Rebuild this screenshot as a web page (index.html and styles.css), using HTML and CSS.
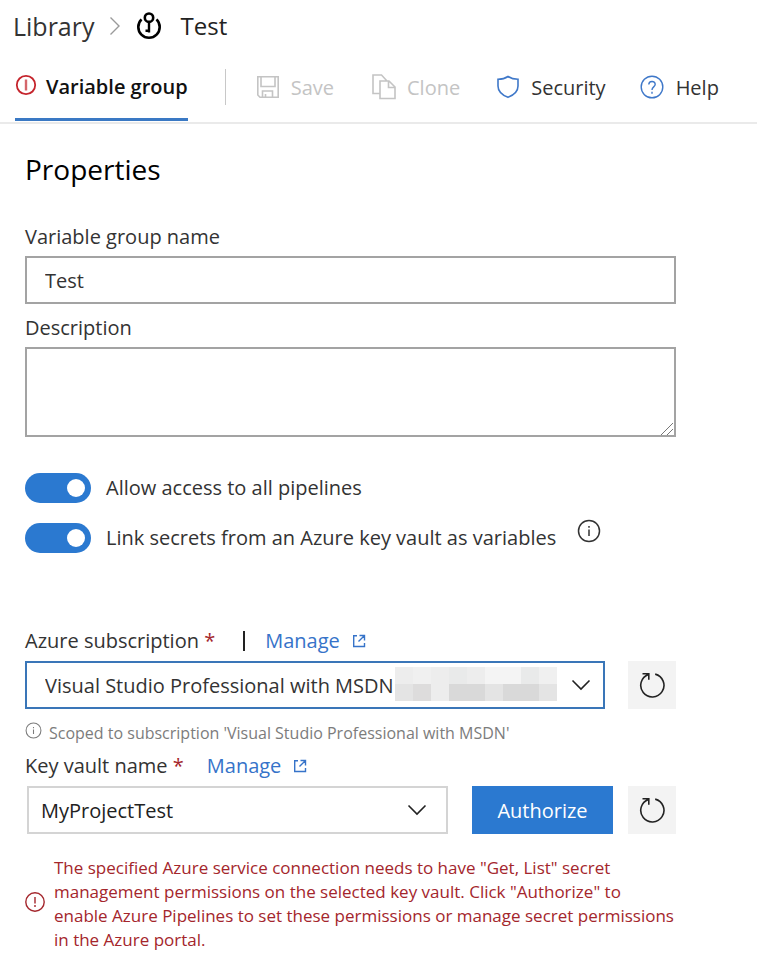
FILE: index.html
```html
<!DOCTYPE html>
<html lang="en">
<head>
<meta charset="utf-8">
<meta name="viewport" content="width=device-width, initial-scale=1">
<title>Test - Library</title>
<link rel="stylesheet" href="styles.css">
</head>
<body>
<svg class="sprite" aria-hidden="true">
  <symbol id="chevron" viewBox="0 0 20 12"><path d="M1.5 1.5 10 10l8.500-8.500" fill="none" stroke="currentColor" stroke-width="1.600"/></symbol>
  <symbol id="external" viewBox="0 0 14 14"><path d="M5 1.700H1.700v10.800h10.800V9M7.500 1.500h5v5M12.500 1.500 6.500 7.500" fill="none" stroke="currentColor" stroke-width="1.400"/></symbol>
  <symbol id="refresh" viewBox="0 0 28 28"><path d="M10.500 3.400A11.600 11.600 0 1 0 17.200 3.100M4.500 2.800h6.300v6" fill="none" stroke="currentColor" stroke-width="1.600"/></symbol>
  <symbol id="info" viewBox="0 0 24 24"><circle cx="12" cy="12" r="10.500" fill="none" stroke="currentColor" stroke-width="1.500"/><path d="M12 10.500v6.500M12 7v1.800" stroke="currentColor" stroke-width="1.500"/></symbol>
  <symbol id="alert" viewBox="0 0 22 22"><circle cx="11" cy="11" r="9.200" fill="none" stroke="currentColor" stroke-width="1.400"/><path d="M11 6v6.500M11 14v2" stroke="currentColor" stroke-width="1.400"/></symbol>
</svg>
<header>
  <nav class="breadcrumb" aria-label="Breadcrumb">
    <a href="#">Library</a>
    <svg class="crumb-arrow" width="12" height="20" viewBox="0 0 12 20" aria-hidden="true"><path d="M1.500 1.500 10 10l-8.500 8.500" fill="none" stroke="#9a9a9a" stroke-width="1.400"/></svg>
    <svg class="crumb-key" width="26" height="28" viewBox="0 0 26 28" aria-hidden="true"><g fill="none" stroke="#000" stroke-width="2.600"><path d="M5.500 7.400a10.700 10.700 0 1 0 15 0"/><circle cx="13" cy="5.700" r="4.200"/><path d="M13 10v10.500M13 18.700H9.500" stroke-width="2.400"/></g></svg>
    <h1>Test</h1>
  </nav>
  <div class="toolbar">
    <a class="tab" href="#" aria-current="page"><svg width="22" height="22" viewBox="0 0 22 22" aria-hidden="true"><circle cx="11" cy="11" r="9.200" fill="none" stroke="#c5242c" stroke-width="1.800"/><path d="M11 5.500v11" stroke="#d4666b" stroke-width="2.400"/></svg>Variable group</a>
    <button class="command save" type="button" disabled><svg width="22" height="22" viewBox="0 0 22 22" fill="none" stroke="currentColor" stroke-width="1.600" aria-hidden="true"><path d="M.8.8h20.400v20.400H3L.8 19zM4 .8v9.700h14V.8M5.500 21v-6h10v6M8.500 21v-3"/></svg>Save</button>
    <button class="command clone" type="button" disabled><svg width="24" height="26" viewBox="0 0 24 26" fill="none" stroke="currentColor" stroke-width="1.600" aria-hidden="true"><path d="M7.800 19.500H1V1h8.500l5.500 6M17 7H8v17.500h15V13zM16.500 7.500V13.500H23"/></svg>Clone</button>
    <button class="command security" type="button"><svg width="22" height="24" viewBox="0 0 22 24" fill="none" stroke="#3f78c9" stroke-width="1.600" aria-hidden="true"><path d="M11 1.500C8 3.500 4.500 4.200 1 4.200V11c0 5.500 4.500 9.200 10 11.300 5.500-2.100 10-5.800 10-11.300V4.200c-3.500 0-7-.7-10-2.700z"/></svg>Security</button>
    <button class="command help" type="button"><svg width="24" height="24" viewBox="0 0 24 24" fill="none" stroke="#3f78c9" stroke-width="1.400" aria-hidden="true"><circle cx="12" cy="12" r="10.800"/><path d="M8.800 9.500c0-4 6.400-4 6.400-.3 0 2.600-3.200 2.800-3.200 5.800M12 16.800v2"/></svg>Help</button>
  </div>
</header>
<main>
  <h2>Properties</h2>
  <label class="label" for="name">Variable group name</label>
  <input class="box" id="name" type="text" value="Test">
  <label class="label" for="description">Description</label>
  <div class="area">
    <textarea class="box" id="description"></textarea>
    <svg class="grip" width="14" height="14" viewBox="0 0 14 14" aria-hidden="true"><path d="M1 13 13 1M7 13l6-6" stroke="#777" stroke-width="1"/></svg>
  </div>
  <div class="switches">
    <div class="switch-row"><input class="switch" id="access" type="checkbox" role="switch" checked><label for="access">Allow access to all pipelines</label></div>
    <div class="switch-row"><input class="switch" id="secrets" type="checkbox" role="switch" checked><label for="secrets">Link secrets from an Azure key vault as variables</label><svg class="hint" width="24" height="24" aria-hidden="true"><use href="#info"/></svg></div>
  </div>
  <div class="label-row"><label for="subscription">Azure subscription <span class="required">*</span></label><span class="divider"></span><a class="manage" href="#">Manage<svg width="14" height="14" aria-hidden="true"><use href="#external"/></svg></a></div>
  <div class="control-row">
    <div class="picker subscription">
      <select id="subscription"><option>Visual Studio Professional with MSDN</option></select>
      <div class="redacted" aria-hidden="true"><i class="b"></i><i class="c"></i><i class="b"></i><i class="a"></i><i class="b"></i><i class="d"></i><i class="d"></i><i class="a"></i><i class="c"></i><i class="e"></i><i class="f"></i><i class="b"></i><i class="g"></i><i class="g"></i><i class="e"></i><i class="g"></i><i class="g"></i><i class="e"></i></div>
      <svg class="arrow" width="20" height="12" aria-hidden="true"><use href="#chevron"/></svg>
    </div>
    <button class="refresh" type="button" aria-label="Refresh"><svg width="28" height="28" aria-hidden="true"><use href="#refresh"/></svg></button>
  </div>
  <p class="note"><svg width="17" height="17" aria-hidden="true"><use href="#info"/></svg>Scoped to subscription 'Visual Studio Professional with MSDN'</p>
  <div class="label-row"><label for="vault">Key vault name <span class="required">*</span></label><a class="manage" href="#">Manage<svg width="14" height="14" aria-hidden="true"><use href="#external"/></svg></a></div>
  <div class="control-row">
    <div class="picker vault">
      <select id="vault"><option>MyProjectTest</option></select>
      <svg class="arrow" width="20" height="12" aria-hidden="true"><use href="#chevron"/></svg>
    </div>
    <button class="authorize" type="button">Authorize</button>
    <button class="refresh" type="button" aria-label="Refresh"><svg width="28" height="28" aria-hidden="true"><use href="#refresh"/></svg></button>
  </div>
  <div class="error" role="alert"><svg width="22" height="22" aria-hidden="true"><use href="#alert"/></svg><p>The specified Azure service connection needs to have "Get, List" secret management permissions on the selected key vault. Click "Authorize" to enable Azure Pipelines to set these permissions or manage secret permissions in the Azure portal.</p></div>
</main>
</body>
</html>
```
FILE: styles.css
```css
* { box-sizing: border-box; }
body { margin: 0; background: #fff; color: #333; font: 20px/28px "Segoe UI", "Open Sans", sans-serif; }
h1, h2, p { margin: 0; font-weight: 400; }
a { color: inherit; text-decoration: none; }
button, input, select, textarea { font: inherit; color: inherit; }
button { border: 0; padding: 0; background: none; }
svg { flex: none; }
.sprite { position: absolute; width: 0; height: 0; }

.breadcrumb { display: flex; align-items: center; height: 52px; padding-left: 13px; font-size: 25px; }
.breadcrumb h1 { font-size: 24px; color: #222; }
.crumb-arrow { margin: 0 15px 0 14px; }
.crumb-key { margin-right: 19px; }

.toolbar { display: flex; align-items: stretch; height: 72px; padding-left: 15px; border-bottom: 2px solid #eaeaea; }
.tab { display: flex; align-items: center; gap: 9px; margin-bottom: 1px; padding-top: 3px; border-bottom: 3px solid #3a79c4; color: #111; font-weight: 600; }
.tab svg, .command svg { margin-bottom: 3px; }
.command { display: flex; align-items: center; gap: 12px; padding-top: 2px; color: #333; }
.command:disabled { color: #c4c4c4; }
.save { margin-left: 37px; padding-left: 32px; background: linear-gradient(#c8c8c8, #c8c8c8) 0 50% / 1px 36px no-repeat; }
.clone { gap: 11px; margin-left: 38px; }
.security { margin-left: 37px; }
.help { margin-left: 34px; }

main { padding: 27px 81px 0 25px; }
h2 { margin-bottom: 36px; color: #000; font-size: 28px; line-height: 36px; }
.label { display: block; margin-bottom: 5px; }
.box { display: block; width: 100%; margin-bottom: 10px; padding: 0 18px; border: 2px solid #a3a3a3; border-radius: 0; background: #fff; outline: 0; }
input.box { height: 48px; }
.area { position: relative; margin-bottom: 36px; }
textarea.box { height: 90px; margin: 0; resize: vertical; }
textarea::-webkit-resizer { background: transparent; }
.grip { position: absolute; right: 2px; bottom: 1px; pointer-events: none; }

.switches { display: grid; gap: 20px; margin-bottom: 74px; }
.switch-row { display: flex; align-items: center; height: 30px; gap: 15px; }
.switch { display: flex; align-items: center; justify-content: flex-end; flex: none; width: 66px; height: 30px; margin: 0; padding-right: 6px; border-radius: 15px; background: #2b79d0; appearance: none; }
.switch::before { content: ""; width: 18px; height: 18px; border-radius: 50%; background: #fff; }
.hint { margin: 0 0 14px 6px; }

.label-row { display: flex; align-items: center; height: 28px; margin-bottom: 6px; }
.required { color: #a4262c; }
.divider { width: 2px; height: 20px; margin-left: 28px; background: #222; }
.manage { display: flex; align-items: center; gap: 12px; margin-left: 23px; color: #3673c9; }
.divider + .manage { margin-left: 20px; }

.control-row { display: flex; align-items: center; }
.picker { position: relative; flex: 1; }
.picker select { display: block; width: 100%; height: 48px; padding: 2px 18px 0; border: 2px solid #3a76b8; border-radius: 0; background: #fff; outline: 0; appearance: none; }
.vault { margin-left: 2px; }
.vault select { padding: 2px 12px 0; border-color: #d4d4d4; color: #222; }
.arrow { position: absolute; top: 18px; right: 14px; color: #222; pointer-events: none; }
.vault .arrow { right: 21px; }
.redacted { position: absolute; top: 6px; left: 370px; display: grid; grid-template-columns: repeat(9, 18px); grid-auto-rows: 17px; pointer-events: none; }
.a { background: #e9eaea; }
.b { background: #ededed; }
.c { background: #f0f0f0; }
.d { background: #f4f4f4; }
.e { background: #e4e4e4; }
.f { background: #dddcdc; }
.g { background: #d9d9d9; }
.refresh { display: grid; place-items: center; width: 48px; height: 48px; margin-left: 23px; background: #f3f3f3; color: #222; }
.authorize { width: 141px; height: 48px; margin-left: 24px; padding-top: 2px; background: #2b79d0; color: #fff; }
.authorize + .refresh { margin-left: 15px; }

.note { display: flex; align-items: center; gap: 7px; height: 24px; margin: 12px 0 7px; color: #7c7c7c; font-size: 16px; line-height: 24px; }
.note svg { margin-bottom: 5px; }
.error { display: flex; align-items: center; gap: 8px; margin: 22px 0 20px -1px; color: #a4262c; font-size: 17px; line-height: 24px; }
.error svg { margin-bottom: 4px; }
```
